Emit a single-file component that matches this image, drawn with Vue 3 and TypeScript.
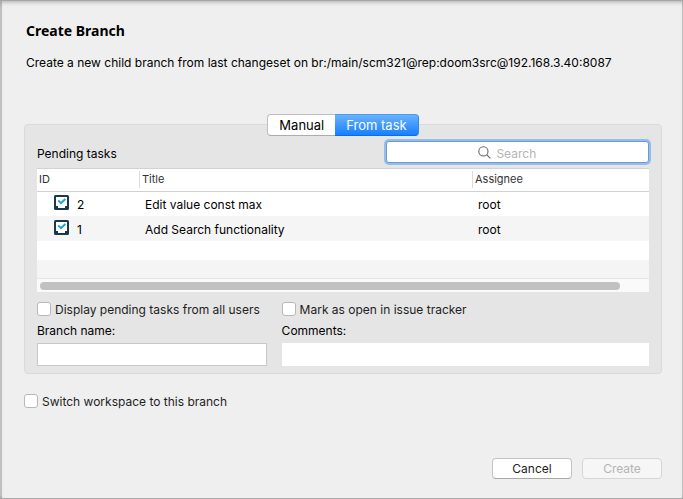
<script setup lang="ts">
import { ref } from 'vue'

interface Task {
  id: number
  title: string
  assignee: string
}

const tasks: Task[] = [
  { id: 2, title: 'Edit value const max', assignee: 'root' },
  { id: 1, title: 'Add Search functionality', assignee: 'root' },
]

const activeTab = ref<'manual' | 'task'>('task')
const search = ref('')
const allUsers = ref(false)
const markOpen = ref(false)
const switchWorkspace = ref(false)
const branchName = ref('')
const comments = ref('')
</script>

<template>
  <div class="backdrop">
    <main class="dialog">
      <h1 class="heading">Create Branch</h1>
      <p class="intro">Create a new child branch from last changeset on br:/main/scm321@rep:doom3src@192.168.3.40:8087</p>

      <div class="tabs" role="tablist">
        <button
          type="button"
          role="tab"
          class="tab"
          :class="{ active: activeTab === 'manual' }"
          :aria-selected="activeTab === 'manual'"
          @click="activeTab = 'manual'"
        >Manual</button>
        <button
          type="button"
          role="tab"
          class="tab"
          :class="{ active: activeTab === 'task' }"
          :aria-selected="activeTab === 'task'"
          @click="activeTab = 'task'"
        >From task</button>
      </div>

      <section class="panel">
        <div class="toolbar">
          <label class="pending" for="search">Pending tasks</label>
          <div class="search">
            <svg class="lens" viewBox="0 0 13 13" aria-hidden="true">
              <circle cx="5.4" cy="5.4" r="4.6" />
              <path d="M8.8 8.8l3.6 3.6" />
            </svg>
            <input id="search" v-model="search" class="search-input" type="text" placeholder="Search" />
          </div>
        </div>

        <div class="list">
          <table class="table">
            <colgroup>
              <col class="col-id" />
              <col class="col-title" />
              <col />
            </colgroup>
            <thead>
              <tr>
                <th><span class="th-text">ID</span></th>
                <th><span class="th-text split">Title</span></th>
                <th><span class="th-text split">Assignee</span></th>
              </tr>
            </thead>
            <tbody>
              <tr v-for="task in tasks" :key="task.id">
                <td>
                  <span class="id-cell">
                    <svg class="task-icon" viewBox="0 0 15 15" aria-hidden="true">
                      <rect width="15" height="15" rx="1.5" fill="#17384f" />
                      <path d="M2 2h11v9h-2v2H4v-2H2z" fill="#fff" />
                      <path d="M4.2 5.4l2.8 2.7 4.4-4" fill="none" stroke="#1fa6cc" stroke-width="2" />
                    </svg>
                    <span>{{ task.id }}</span>
                  </span>
                </td>
                <td>{{ task.title }}</td>
                <td>{{ task.assignee }}</td>
              </tr>
            </tbody>
          </table>
          <div class="filler"></div>
          <div class="track"><div class="thumb"></div></div>
        </div>

        <div class="fields">
          <label class="check"><input v-model="allUsers" type="checkbox" class="box" /><span class="check-text">Display pending tasks from all users</span></label>
          <label class="check"><input v-model="markOpen" type="checkbox" class="box" /><span class="check-text">Mark as open in issue tracker</span></label>
          <label class="field-label" for="branch">Branch name:</label>
          <label class="field-label" for="comments">Comments:</label>
          <input id="branch" v-model="branchName" class="field bordered" type="text" />
          <input id="comments" v-model="comments" class="field" type="text" />
        </div>
      </section>

      <label class="check switch"><input v-model="switchWorkspace" type="checkbox" class="box" /><span class="check-text">Switch workspace to this branch</span></label>

      <footer class="actions">
        <button type="button" class="button">Cancel</button>
        <button type="button" class="button" disabled>Create</button>
      </footer>
    </main>
  </div>
</template>

<style>
body {
  background: #c4c4c4;
}
</style>

<style scoped>
.backdrop,
.backdrop * {
  box-sizing: border-box;
}
.backdrop {
  display: flex;
  min-height: 100vh;
  padding: 1px 1px 1px 2px;
  background: linear-gradient(#a5a5a5, #c0c0c0 8px, #c0c0c0 calc(100% - 4px), #a5a5a5);
  font-family: Inter, "Liberation Sans", sans-serif;
  font-size: 12px;
  line-height: 16px;
  color: #000;
}
.dialog {
  flex: 1;
  display: flex;
  flex-direction: column;
  min-width: 0;
  padding: 20px 20px 19px 22px;
  background: #efefef;
  box-shadow: inset 0 4px 4px -3px #aaa;
}
.heading {
  margin: 0 2px;
  font-family: "Noto Sans", "Open Sans", sans-serif;
  font-size: 14px;
  line-height: 20px;
  font-weight: 700;
}
.intro {
  margin: 14px 2px 0;
}
.tabs {
  z-index: 1;
  display: flex;
  align-self: center;
  margin-top: 43px;
  margin-bottom: -12px;
}
.tab {
  height: 22px;
  padding: 0 11px;
  border: 1px solid #c0c0c0;
  border-bottom-color: #acacac;
  background: #fff;
  font: inherit;
  font-size: 13px;
  color: #000;
}
.tab:first-child {
  border-right: 0;
  border-radius: 4px 0 0 4px;
}
.tab:last-child {
  border-left: 0;
  border-radius: 0 4px 4px 0;
}
.tab.active {
  border-color: #4a9bf8 #2a86fb #0a6af0;
  background: linear-gradient(#69b1fa, #1680ff);
  color: #fff;
}
.panel {
  padding: 16px 12px 7px;
  border: 1px solid #dadada;
  border-radius: 4px;
  background: #e5e5e5;
}
.toolbar {
  display: flex;
  align-items: center;
  gap: 16px;
  height: 22px;
}
.pending {
  flex: 1;
  padding-top: 4px;
}
.search {
  display: flex;
  align-items: center;
  justify-content: center;
  gap: 5px;
  width: 43%;
  height: 22px;
  border: 1px solid #6c9bcb;
  border-radius: 3px;
  background: #fff;
  box-shadow: 0 0 0 2px #92bdee;
}
.lens {
  width: 13px;
  height: 13px;
  fill: none;
  stroke: #666;
  stroke-width: 1.1;
}
.search-input {
  width: 60px;
  height: 20px;
  padding: 2px 0 0;
  border: 0;
  outline: 0;
  background: transparent;
  font: inherit;
}
.search-input::placeholder {
  color: #b4b4b4;
  opacity: 1;
}
.list {
  margin-top: 5px;
  border-top: 1px solid #d2d2d2;
  background: #fff;
}
.table {
  width: 100%;
  border-collapse: collapse;
  table-layout: fixed;
}
.col-id {
  width: 102px;
}
.col-title {
  width: 333px;
}
th {
  height: 22px;
  padding: 0;
  border-bottom: 1px solid #d2d2d2;
  font-size: 11px;
  font-weight: 400;
  text-align: left;
  color: #333;
}
.th-text {
  display: block;
  padding-left: 2px;
  line-height: 17px;
}
.split {
  border-left: 1px solid #dcdcdc;
}
td {
  height: 25px;
  padding: 2px 0 0 6px;
}
td:first-child {
  padding-left: 17px;
}
tbody tr:nth-child(even) {
  background: #f5f5f5;
}
.id-cell {
  display: flex;
  align-items: center;
  gap: 8px;
}
.task-icon {
  width: 15px;
  height: 15px;
  margin-bottom: 4px;
}
.filler {
  height: 37px;
  background: linear-gradient(#fff 19px, #f5f5f5 19px);
}
.track {
  padding: 3px 29px 2px 3px;
  border-top: 1px solid #e5e5e5;
  background: #fafafa;
}
.thumb {
  height: 8px;
  border-radius: 4px;
  background: #c1c1c1;
}
.fields {
  display: grid;
  grid-template-columns: 5fr 8fr;
  column-gap: 15px;
  margin-top: 8px;
}
.check {
  display: flex;
  align-items: center;
  gap: 4px;
  color: #1e1e1e;
}
.check-text {
  padding-top: 2px;
}
.box {
  flex: none;
  appearance: none;
  width: 14px;
  height: 14px;
  margin: 0;
  border: 1px solid #b8b8b8;
  border-radius: 3px;
  background: #fff;
}
.box:checked {
  background: #2a86fb;
}
.field-label {
  margin-top: 5px;
}
.field {
  width: 100%;
  height: 23px;
  margin-top: 4px;
  padding: 0 4px;
  border: 0;
  border-radius: 0;
  background: #fff;
  font: inherit;
}
.bordered {
  border: 1px solid #c8c8c8;
}
.switch {
  margin-top: 18px;
  align-self: flex-start;
}
.actions {
  display: flex;
  justify-content: flex-end;
  gap: 10px;
  margin-top: auto;
}
.button {
  width: 80px;
  height: 21px;
  padding: 0;
  border: 1px solid #c4c4c4;
  border-bottom-color: #a8a8a8;
  border-radius: 4px;
  background: #fff;
  font: inherit;
  color: #1e1e1e;
}
.button:disabled {
  border-color: #d6d6d6;
  background: #f6f6f6;
  color: #b4b4b4;
}
</style>
